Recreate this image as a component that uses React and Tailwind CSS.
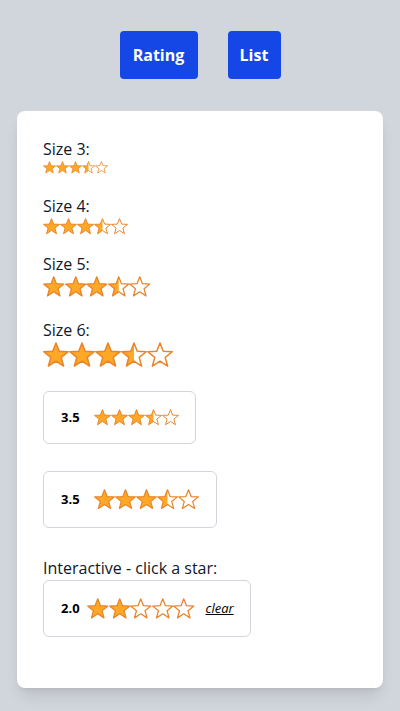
import React, { useId, useState } from "react";

const STAR =
  "M12 0.9 L15.0 8.6 L23.3 9.0 L16.8 14.2 L19.0 22.2 L12 17.6 L5.0 22.2 L7.2 14.2 L0.7 9.0 L9.0 8.6 Z";

function Star({ px, fill }) {
  const id = useId();
  return (
    <svg width={px} height={px} viewBox="0 0 24 24" className="block shrink-0 overflow-visible">
      <defs>
        <clipPath id={id}>
          <rect x="0" y="0" width={24 * fill} height="24" />
        </clipPath>
      </defs>
      <path d={STAR} fill="#ffffff" />
      {fill > 0 && <path d={STAR} fill="#ffa726" clipPath={`url(#${id})`} />}
      <path d={STAR} fill="none" stroke="#e8852a" strokeWidth="1.4" strokeLinejoin="round" />
    </svg>
  );
}

function Stars({ value, px, onPick }) {
  return (
    <div className="flex items-center">
      {[0, 1, 2, 3, 4].map((i) => {
        const f = Math.max(0, Math.min(1, value - i));
        return onPick ? (
          <button key={i} type="button" onClick={() => onPick(i + 1)} className="block cursor-pointer p-0">
            <Star px={px} fill={f} />
          </button>
        ) : (
          <Star key={i} px={px} fill={f} />
        );
      })}
    </div>
  );
}

export default function App() {
  const [val, setVal] = useState(2);
  const font = { fontFamily: '"Open Sans", "Noto Sans", sans-serif' };
  return (
    <div className="min-h-[711px] bg-gray-300 pt-[31px] pb-[23px]" style={font}>
      <div className="flex justify-center gap-[30px]">
        <button className="h-12 w-[78px] rounded bg-blue-700 text-[16px] font-bold text-white">Rating</button>
        <button className="h-12 w-[53px] rounded bg-blue-700 text-[16px] font-bold text-white">List</button>
      </div>
      <div className="mx-[17px] mt-[32px] rounded-lg bg-white px-[26px] pt-[26px] pb-[51px] shadow-lg">
        <div className="text-[16px] leading-6 text-gray-900">Size 3:</div>
        <div className="mb-[20px]">
          <Stars value={3.5} px={13} />
        </div>
        <div className="text-[16px] leading-6 text-gray-900">Size 4:</div>
        <div className="mb-[17px]">
          <Stars value={3.5} px={17} />
        </div>
        <div className="text-[16px] leading-6 text-gray-900">Size 5:</div>
        <div className="mb-[20px]">
          <Stars value={3.5} px={21.5} />
        </div>
        <div className="text-[16px] leading-6 text-gray-900">Size 6:</div>
        <div className="mb-[23px]">
          <Stars value={3.5} px={26} />
        </div>

        <div className="mb-[27px] inline-flex items-center rounded-md border border-gray-300 py-[17px] pl-[17px] pr-[16px]">
          <span className="inline-block w-[33px] text-[13px] font-bold leading-4 text-black">3.5</span>
          <Stars value={3.5} px={17} />
        </div>
        <div className="block" />
        <div className="mb-[28px] inline-flex items-center rounded-md border border-gray-300 py-[17px] pl-[17px] pr-[17px]">
          <span className="inline-block w-[33px] text-[13px] font-bold leading-4 text-black">3.5</span>
          <Stars value={3.5} px={21} />
        </div>

        <div className="text-[16px] leading-6 text-gray-900">Interactive - click a star:</div>
        <div className="inline-flex items-center rounded-md border border-gray-300 py-[17px] pl-[17px] pr-[16px]">
          <span className="inline-block w-[26px] text-[13px] font-bold leading-4 text-black">{val.toFixed(1)}</span>
          <Stars value={val} px={21.5} onPick={setVal} />
          <button
            type="button"
            onClick={() => setVal(0)}
            className="ml-[11px] text-[13px] italic leading-4 text-black underline"
          >
            clear
          </button>
        </div>
      </div>
    </div>
  );
}
